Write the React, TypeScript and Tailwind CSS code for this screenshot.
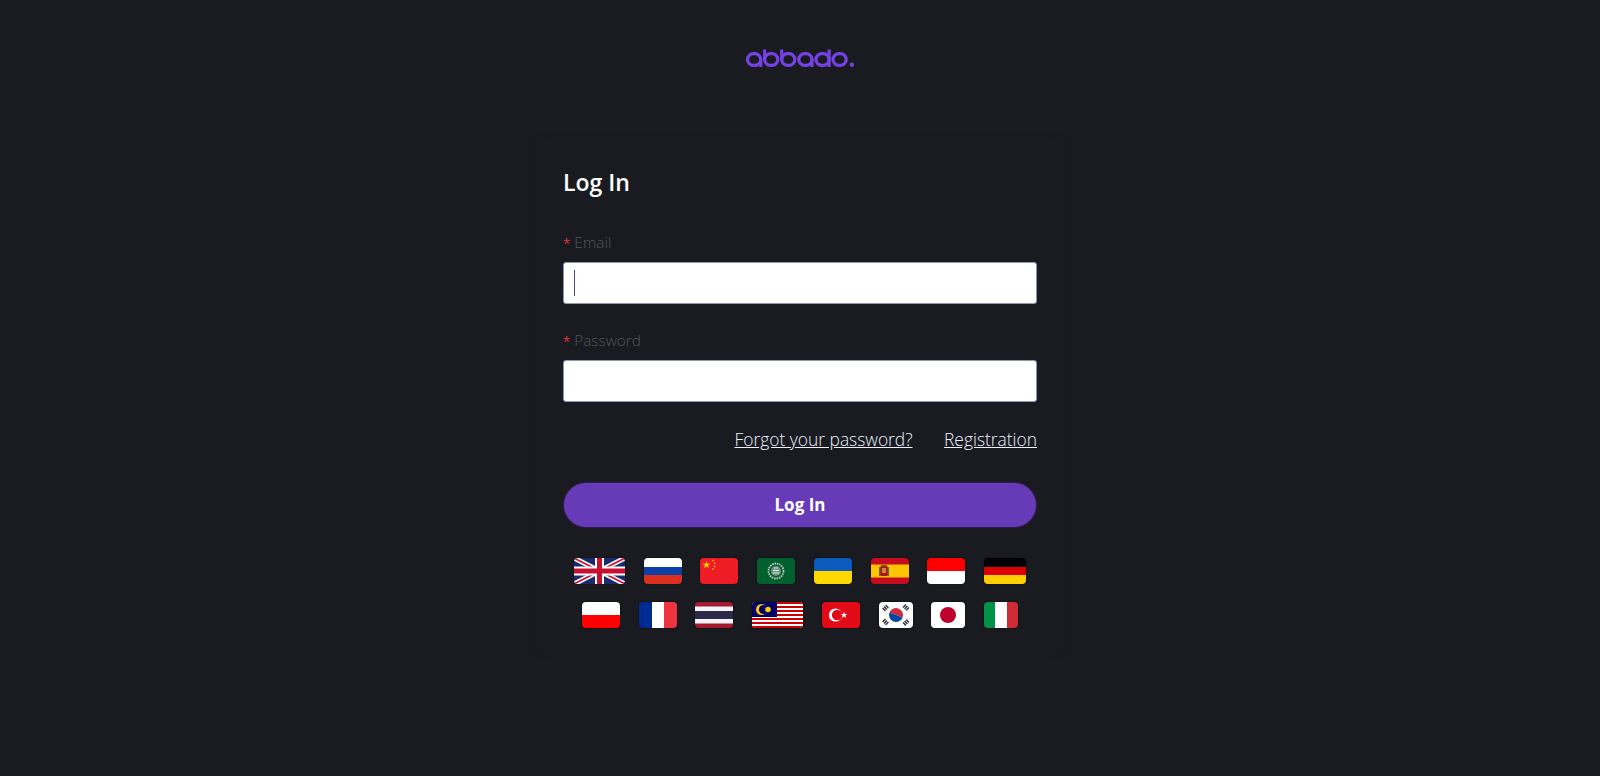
const sans = "font-['Open_Sans',sans-serif]";

function Logo() {
  const pitch = 17.1;
  const left = (i: number) => 2.5 + pitch * i;
  return (
    <svg width="110" height="20" viewBox="0 0 110 20" fill="none" stroke="#7442e6" strokeWidth="3.2" aria-label="abbado.">
      {[0, 1, 2, 3, 4, 5].map((i) => (
        <rect key={i} x={left(i)} y="6.6" width="13.2" height="11.8" rx="5.9" />
      ))}
      {/* stems: a, b, b, a, d */}
      <path d={`M${left(0) + 13.2} 12v8`} />
      <path d={`M${left(1)} 2.5v10`} />
      <path d={`M${left(2)} 2.5v10`} />
      <path d={`M${left(3) + 13.2} 12v8`} />
      <path d={`M${left(4) + 13.2} 2.5v17.5`} />
      <circle cx="106.8" cy="17.8" r="2.2" fill="#7442e6" stroke="none" />
    </svg>
  );
}

function Flag({ w, children }: { w: number; children: React.ReactNode }) {
  return (
    <svg
      width={w}
      height={26}
      viewBox={`0 0 ${w} 26`}
      className="block rounded-[4px] shadow-[0_0_1px_1px_#15161b]"
    >
      {children}
    </svg>
  );
}

const flags: { name: string; w: number; art: React.ReactNode }[] = [
  {
    name: "en",
    w: 51,
    art: (
      <>
        <rect width="51" height="26" fill="#1a2a6c" />
        <path d="M0 0L51 26M51 0L0 26" stroke="#fff" strokeWidth="5" />
        <path d="M0 0L51 26M51 0L0 26" stroke="#c8102e" strokeWidth="1.6" />
        <path d="M25.5 0V26M0 13H51" stroke="#fff" strokeWidth="9" />
        <path d="M25.5 0V26M0 13H51" stroke="#c8102e" strokeWidth="5" />
      </>
    ),
  },
  {
    name: "ru",
    w: 38,
    art: (
      <>
        <rect width="38" height="9" fill="#fff" />
        <rect y="9" width="38" height="8" fill="#0c3fa8" />
        <rect y="17" width="38" height="9" fill="#dc2f1e" />
      </>
    ),
  },
  {
    name: "zh",
    w: 38,
    art: (
      <>
        <rect width="38" height="26" fill="#ee1c25" />
        <polygon points="6.5,3.2 7.4,5.8 10.2,5.8 8,7.5 8.8,10 6.5,8.5 4.2,10 5,7.5 2.8,5.8 5.6,5.8" fill="#ffde00" />
        <circle cx="13" cy="2.6" r=".8" fill="#ffde00" />
        <circle cx="14.6" cy="5.2" r=".8" fill="#ffde00" />
        <circle cx="14.6" cy="8.4" r=".8" fill="#ffde00" />
        <circle cx="13" cy="11" r=".8" fill="#ffde00" />
      </>
    ),
  },
  {
    name: "ar",
    w: 38,
    art: (
      <>
        <rect width="38" height="26" fill="#00612f" />
        <circle cx="19" cy="13" r="7.5" fill="none" stroke="#b9c9be" strokeWidth="1.8" strokeDasharray="1.6 .8" />
        <circle cx="19" cy="13" r="5" fill="#6f9480" />
        <path d="M15.5 15h7M16 12.5h6M17 10h4" stroke="#e8efe9" strokeWidth=".9" />
      </>
    ),
  },
  {
    name: "uk",
    w: 38,
    art: (
      <>
        <rect width="38" height="13" fill="#0a5bbd" />
        <rect y="13" width="38" height="13" fill="#ffd800" />
      </>
    ),
  },
  {
    name: "es",
    w: 38,
    art: (
      <>
        <rect width="38" height="26" fill="#c60b1e" />
        <rect y="6.5" width="38" height="13" fill="#ffc400" />
        <rect x="9" y="8" width="8" height="10" rx="1.5" fill="#ad1519" />
        <rect x="11" y="10" width="4" height="5" fill="#c98a3a" />
        <rect x="8" y="9" width="1.4" height="9" fill="#5f6b4a" />
        <rect x="16.6" y="9" width="1.4" height="9" fill="#5f6b4a" />
        <rect x="10" y="7" width="6" height="1.6" fill="#7a5a20" />
      </>
    ),
  },
  {
    name: "id",
    w: 38,
    art: (
      <>
        <rect width="38" height="13" fill="#ff0000" />
        <rect y="13" width="38" height="13" fill="#fff" />
      </>
    ),
  },
  {
    name: "de",
    w: 42,
    art: (
      <>
        <rect width="42" height="9" fill="#000" />
        <rect y="9" width="42" height="8" fill="#dd0000" />
        <rect y="17" width="42" height="9" fill="#ffce00" />
      </>
    ),
  },
  {
    name: "pl",
    w: 38,
    art: (
      <>
        <rect width="38" height="13" fill="#fff" />
        <rect y="13" width="38" height="13" fill="#ff0000" />
      </>
    ),
  },
  {
    name: "fr",
    w: 38,
    art: (
      <>
        <rect width="13" height="26" fill="#002a94" />
        <rect x="13" width="12" height="26" fill="#fff" />
        <rect x="25" width="13" height="26" fill="#ef3340" />
      </>
    ),
  },
  {
    name: "th",
    w: 38,
    art: (
      <>
        <rect width="38" height="26" fill="#a51931" />
        <rect y="4.5" width="38" height="17" fill="#f4f5f8" />
        <rect y="9" width="38" height="8" fill="#2d2a4a" />
      </>
    ),
  },
  {
    name: "ms",
    w: 51,
    art: (
      <>
        <rect width="51" height="26" fill="#fff" />
        {[0, 4, 8, 12, 16, 20, 24].map((y) => (
          <rect key={y} y={y} width="51" height="2" fill="#cc0001" />
        ))}
        <rect width="25" height="15" fill="#010066" />
        <circle cx="9.5" cy="7.5" r="5.5" fill="#ffcc00" />
        <circle cx="11.5" cy="7.5" r="4.6" fill="#010066" />
        <circle cx="16" cy="7.5" r="2.8" fill="#ffcc00" />
      </>
    ),
  },
  {
    name: "tr",
    w: 38,
    art: (
      <>
        <rect width="38" height="26" fill="#e30a17" />
        <circle cx="13.5" cy="13" r="6.6" fill="#fff" />
        <circle cx="15.2" cy="13" r="5.3" fill="#e30a17" />
        <polygon points="22,9.6 22.8,12 25.4,12 23.3,13.5 24,16 22,14.5 20,16 20.7,13.5 18.6,12 21.2,12" fill="#fff" />
      </>
    ),
  },
  {
    name: "ko",
    w: 34,
    art: (
      <>
        <rect width="34" height="26" fill="#fff" />
        <path d="M10 13a7 7 0 0 1 14 0z" fill="#cd2e3a" transform="rotate(20 17 13)" />
        <path d="M10 13a7 7 0 0 0 14 0z" fill="#0047a0" transform="rotate(20 17 13)" />
        <g stroke="#2b2b2b" strokeWidth="4" strokeDasharray="1.4 .7">
          <path d="M4.5 8L9 3.5" />
          <path d="M25 3.5L29.5 8" />
          <path d="M4.5 18L9 22.5" />
          <path d="M25 22.5L29.5 18" />
        </g>
      </>
    ),
  },
  {
    name: "ja",
    w: 34,
    art: (
      <>
        <rect width="34" height="26" fill="#fff" />
        <circle cx="17" cy="13" r="8" fill="#bc002d" />
      </>
    ),
  },
  {
    name: "it",
    w: 34,
    art: (
      <>
        <rect width="11" height="26" fill="#009246" />
        <rect x="11" width="12" height="26" fill="#fff" />
        <rect x="23" width="11" height="26" fill="#ce2b37" />
      </>
    ),
  },
];

function Field({ label, caret }: { label: string; caret?: boolean }) {
  return (
    <div>
      <label className="block text-[15.4px] leading-[22px] font-light text-[#54565e]">
        <span className="mr-[4px] text-[13px] font-normal text-[#e8323e]">*</span>
        {label}
      </label>
      <div className="relative mt-[8px]">
        <input className="block h-[42px] w-full rounded-[3px] border border-[#9093b8] bg-white" />
        {caret && <span className="absolute top-[8px] left-[11px] h-[26px] w-px bg-[#4a4d80]" />}
      </div>
    </div>
  );
}

export default function App() {
  return (
    <div className={`${sans} flex min-h-screen flex-col items-center bg-[#191b20] pt-[47px]`}>
      <Logo />
      <div className="mt-[71px] w-[526px] rounded-lg px-[26px] pt-[26px] pb-[28px] shadow-[0_0_5px_#181a1e]">
        <h1 className="text-[23px] leading-[36px] font-semibold text-white">Log In</h1>

        <div className="mt-[32px] flex flex-col gap-[26px]">
          <Field label="Email" caret />
          <Field label="Password" />
        </div>

        <div className="mt-[25px] flex justify-end gap-[31.5px] text-[17.4px] leading-[24px] font-light text-[#eef0ff]">
          <a className="underline">Forgot your password?</a>
          <a className="underline">Registration</a>
        </div>

        <button className="mt-[31px] h-[46px] w-full rounded-[23px] border border-[#2c1f4d] bg-[#673ab7] text-[17px] font-bold text-white">
          Log In
        </button>

        <div className="mt-[30px] flex flex-wrap justify-center gap-x-[18.7px] gap-y-[18px]">
          {flags.map((f) => (
            <Flag key={f.name} w={f.w}>
              {f.art}
            </Flag>
          ))}
        </div>
      </div>
    </div>
  );
}
